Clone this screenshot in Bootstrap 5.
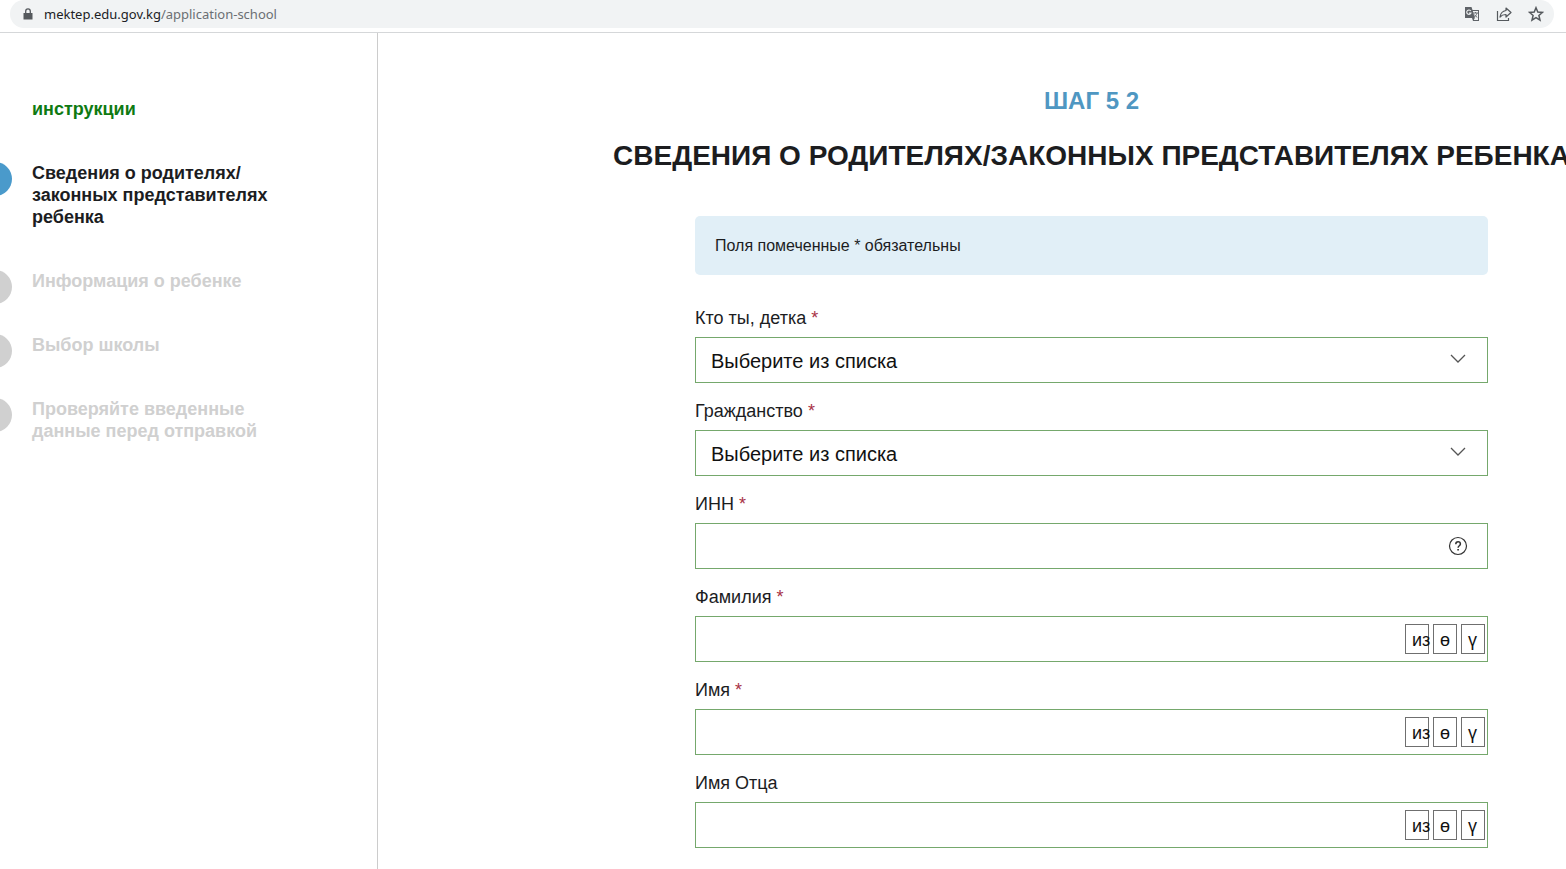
<!DOCTYPE html>
<html lang="ru">
<head>
<meta charset="utf-8">
<meta name="viewport" content="width=device-width, initial-scale=1">
<title>Заявление в школу</title>
<link href="https://cdn.jsdelivr.net/npm/bootstrap@5.3.0/dist/css/bootstrap.min.css" rel="stylesheet">
<style>
body { font-family: "Liberation Sans", Arial, sans-serif; color: #1c1d1f; background: #fff; }
.urlbar { padding: 0 12px 4px 10px; border-bottom: 1px solid #d5d7d9; }
.urlbar-pill { height: 28px; padding: 0 10px 0 12px; background: #f1f3f4; border-radius: 14px; color: #5f6368; }
.urlbar-lock { margin-right: 10px; }
.urlbar-link { font: 13px/28px "Noto Sans", "Open Sans", sans-serif; color: #6b6f73; text-decoration: none; }
.urlbar-link b { font-weight: 400; color: #202124; }
.icon-btn { display: flex; padding: 0; border: 0; background: none; color: #55595d; }
.steps { flex: 0 0 378px; padding: 65px 32px 0 0; border-right: 1px solid #ccc; font-size: 18px; line-height: 22px; font-weight: 700; }
.steps-list { gap: 42px; }
.step-item { gap: 20px; color: #d0d0d0; }
.step-dot { flex: none; width: 34px; height: 34px; margin: 0 0 -12px -22px; border-radius: 50%; background: #d0d0d0; }
.step-item.current { color: #1c1d1f; }
.step-item.current .step-dot { background: #4a9acb; }
.step-text { max-width: 250px; }
.guide-link { padding-left: 32px; color: #0e7a12; text-decoration: none; }
.form-area { min-width: 0; padding: 50px 78px 21px 20px; overflow: hidden; }
.form-col { width: 100%; max-width: 793px; }
.step-no { font-size: 24px; line-height: 36px; color: #4f97c2; }
.page-title { margin: 18px 0 41px; font-size: 28px; line-height: 38px; font-weight: 700; }
.notice { margin-bottom: 29px; padding: 16px 20px; background: #e1eff7; border-radius: 5px; font-size: 16px; line-height: 27px; }
.fields { gap: 14px; }
.fields .form-label { display: block; margin-bottom: 4px; font-size: 18px; line-height: 29px; }
.req { color: #a83246; }
.fields .form-control, .fields .form-select { height: 46px; padding: 0 15px; border: 1px solid #75a86c; border-radius: 0; font-size: 20px; color: #111; }
.fields .form-select {
  padding-top: 2px;
  background-image: url("data:image/svg+xml,%3Csvg xmlns='http://www.w3.org/2000/svg' viewBox='0 0 16 16'%3E%3Cpath d='M1 4l7 7 7-7' fill='none' stroke='%23555' stroke-width='1.3'/%3E%3C/svg%3E");
  background-position: right 21px top 13px; background-size: 16px 16px;
}
.fields .keys { right: 3px; gap: 4px; }
.key-btn { display: block; width: 24px; height: 30px; padding: 0 0 0 6px; border: 1px solid #6f6f6f; background: #fff; font-size: 18px; line-height: 30px; text-align: left; white-space: nowrap; color: #111; }
.help-btn { right: 20px; }
</style>
</head>
<body class="d-flex flex-column min-vh-100">
<header class="urlbar">
  <div class="urlbar-pill d-flex align-items-center">
    <svg width="12" height="12" viewBox="0 0 12 12" class="urlbar-lock" aria-hidden="true"><path d="M2 5h8.500v6.500H1.500V5z" fill="#55595d"/><path d="M3.700 5V3.200a2.300 2.300 0 0 1 4.600 0V5" fill="none" stroke="#55595d" stroke-width="1.300"/></svg>
    <a class="urlbar-link" href="#"><b>mektep.edu.gov.kg</b>/application-school</a>
    <div class="d-flex align-items-center gap-3 ms-auto">
      <button class="icon-btn" type="button" aria-label="Перевести"><svg width="16" height="16" viewBox="0 0 16 16"><path d="M1 1h6.500l1 3H15v11H9l-1-3H1z" fill="#5f6368"/><path d="M8.800 5H14v9H9.800l1-2z" fill="#f1f3f4"/><path d="M6.800 5A2.200 2.200 0 1 0 7 7H5" fill="none" stroke="#f1f3f4" stroke-width="1.100"/><path d="M9 7h5M11.500 6v1M13 7.200c-.6 2-1.800 3.200-3 4M10.300 8.500c.6 1.200 1.700 2.200 3 2.800" fill="none" stroke="#5f6368" stroke-width=".9"/></svg></button>
      <button class="icon-btn" type="button" aria-label="Поделиться"><svg width="16" height="16" viewBox="0 0 16 16" fill="none" stroke="currentColor" stroke-width="1.200"><path d="M1.500 5v9.500h11V12"/><path d="M10 2l5 4.500-5 4.500V8.500C7.500 8.400 5.600 9.200 4 11c.5-3.500 2.500-6 6-6.500z" stroke-linejoin="round"/></svg></button>
      <button class="icon-btn" type="button" aria-label="В закладки"><svg width="16" height="16" viewBox="0 0 16 16" fill="none" stroke="currentColor" stroke-width="1.500"><path d="M8 1.700l1.800 4.300 4.700.4-3.600 3.100 1.100 4.600L8 11.600l-4 2.500 1.100-4.600L1.500 6.400 6.200 6z"/></svg></button>
    </div>
  </div>
</header>
<div class="d-flex flex-grow-1">
  <nav class="steps" aria-label="Шаги">
    <div class="steps-list d-flex flex-column">
      <a class="guide-link" href="#">инструкции</a>
      <div class="step-item current d-flex"><span class="step-dot"></span><span class="step-text">Сведения о родителях/<wbr>законных представителях ребенка</span></div>
      <div class="step-item d-flex"><span class="step-dot"></span><span class="step-text">Информация о ребенке</span></div>
      <div class="step-item d-flex"><span class="step-dot"></span><span class="step-text">Выбор школы</span></div>
      <div class="step-item d-flex"><span class="step-dot"></span><span class="step-text">Проверяйте введенные данные перед отправкой</span></div>
    </div>
  </nav>
  <main class="form-area flex-grow-1 d-flex justify-content-end">
    <div class="form-col">
      <div class="d-flex flex-column align-items-center text-nowrap">
        <div class="step-no fw-bold">ШАГ 5 2</div>
        <h1 class="page-title">СВЕДЕНИЯ О РОДИТЕЛЯХ/ЗАКОННЫХ ПРЕДСТАВИТЕЛЯХ РЕБЕНКА</h1>
      </div>
      <div class="notice">Поля помеченные * обязательны</div>
      <form class="fields d-flex flex-column">
        <div>
          <label class="form-label" for="who">Кто ты, детка <span class="req">*</span></label>
          <select class="form-select" id="who"><option>Выберите из списка</option></select>
        </div>
        <div>
          <label class="form-label" for="citizen">Гражданство <span class="req">*</span></label>
          <select class="form-select" id="citizen"><option>Выберите из списка</option></select>
        </div>
        <div>
          <label class="form-label" for="inn">ИНН <span class="req">*</span></label>
          <div class="position-relative">
            <input class="form-control" id="inn" type="text">
            <button class="icon-btn help-btn position-absolute top-50 translate-middle-y" type="button" aria-label="Помощь"><svg width="20" height="20" viewBox="0 0 20 20" fill="none" stroke="#333" stroke-width="1.200"><circle cx="10" cy="10" r="8.500"/><path d="M7.800 8.200C7.800 5 12.400 5.200 12.400 8c0 1.700-2.300 1.800-2.300 3.700" stroke-width="1.500"/><path d="M10.100 13v1.600" stroke-width="1.700"/></svg></button>
          </div>
        </div>
        <div>
          <label class="form-label" for="surname">Фамилия <span class="req">*</span></label>
          <div class="position-relative">
            <input class="form-control" id="surname" type="text">
            <div class="keys d-flex position-absolute top-50 translate-middle-y"><button class="key-btn" type="button">из</button><button class="key-btn" type="button">ө</button><button class="key-btn" type="button">ү</button></div>
          </div>
        </div>
        <div>
          <label class="form-label" for="name">Имя <span class="req">*</span></label>
          <div class="position-relative">
            <input class="form-control" id="name" type="text">
            <div class="keys d-flex position-absolute top-50 translate-middle-y"><button class="key-btn" type="button">из</button><button class="key-btn" type="button">ө</button><button class="key-btn" type="button">ү</button></div>
          </div>
        </div>
        <div>
          <label class="form-label" for="patronymic">Имя Отца</label>
          <div class="position-relative">
            <input class="form-control" id="patronymic" type="text">
            <div class="keys d-flex position-absolute top-50 translate-middle-y"><button class="key-btn" type="button">из</button><button class="key-btn" type="button">ө</button><button class="key-btn" type="button">ү</button></div>
          </div>
        </div>
      </form>
    </div>
  </main>
</div>
<script src="https://cdn.jsdelivr.net/npm/bootstrap@5.3.0/dist/js/bootstrap.bundle.min.js"></script>
</body>
</html>
